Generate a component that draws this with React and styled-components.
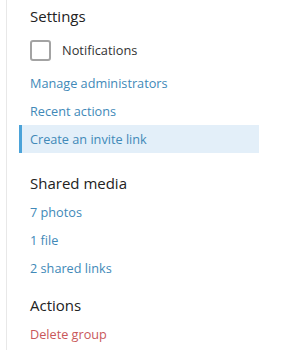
import React from "react";
import styled, { createGlobalStyle } from "styled-components";

const Global = createGlobalStyle`
  html, body { margin: 0; padding: 0; background: #fff; }
  body { font-family: "Open Sans", "Noto Sans", sans-serif; -webkit-font-smoothing: antialiased; }
`;

const Page = styled.div`
  padding-left: 6px;
`;

const Panel = styled.div`
  height: 350px;
  border-left: 1px solid #e8e8e8;
  padding-left: 12px;
  padding-top: 5px;
  box-sizing: border-box;
  width: 253px;
`;

const Section = styled.section`
  display: flex;
  flex-direction: column;
  margin-bottom: ${(p) => p.$after || 0}px;
`;

const Header = styled.h3`
  margin: 0 0 ${(p) => p.$gap || 2}px 11px;
  font-size: 15px;
  line-height: 22px;
  font-weight: 400;
  color: #222;
`;

const CheckRow = styled.label`
  display: flex;
  align-items: center;
  gap: 11px;
  padding-left: 11px;
  height: 22px;
  margin: 10px 0 8px;
  font-size: 12.8px;
  color: #333;
`;

const Box = styled.span`
  width: 21px;
  height: 21px;
  box-sizing: border-box;
  border: 2px solid #a3a3a3;
  border-radius: 3px;
  flex: none;
`;

const Row = styled.div`
  height: 28px;
  display: flex;
  align-items: center;
  box-sizing: border-box;
  padding-left: ${(p) => (p.$active ? 8 : 11)}px;
  border-left: ${(p) => (p.$active ? "3px solid #4ba3d9" : "none")};
  background: ${(p) => (p.$active ? "#e3eff9" : "transparent")};
  font-size: 12.7px;
  color: ${(p) => (p.$danger ? "#c9575a" : "#4189b8")};
`;

export default function App() {
  return (
    <Page>
      <Global />
      <Panel>
        <Section $after={19}>
          <Header>Settings</Header>
          <CheckRow>
            <Box />
            Notifications
          </CheckRow>
          <Row>Manage administrators</Row>
          <Row>Recent actions</Row>
          <Row $active>Create an invite link</Row>
        </Section>
        <Section $after={12}>
          <Header $gap={4}>Shared media</Header>
          <Row>7 photos</Row>
          <Row>1 file</Row>
          <Row>2 shared links</Row>
        </Section>
        <Section>
          <Header $gap={4}>Actions</Header>
          <Row $danger>Delete group</Row>
        </Section>
      </Panel>
    </Page>
  );
}
